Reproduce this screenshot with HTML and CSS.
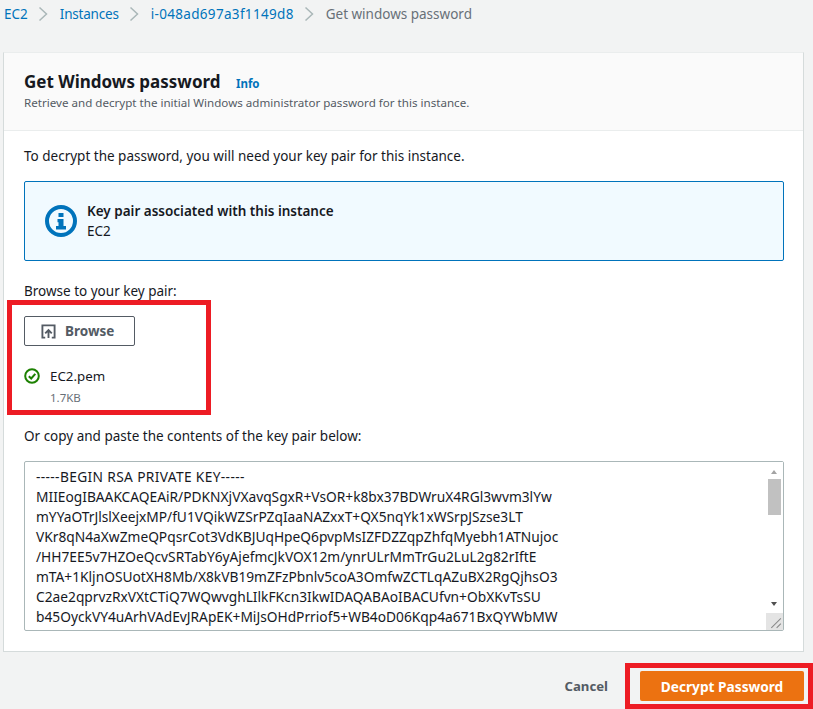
FILE: index.html
```html
<!DOCTYPE html>
<html lang="en">
<head>
<meta charset="utf-8">
<title>Get Windows password</title>
<link rel="stylesheet" href="styles.css">
</head>
<body>
<nav class="crumbs">
  <a class="link" href="#">EC2</a>
  <svg class="sep" viewBox="0 0 10 16"><path d="M1.500 1.500 8.500 8l-7 6.500"/></svg>
  <a class="link link-tight" href="#">Instances</a>
  <svg class="sep" viewBox="0 0 10 16"><path d="M1.500 1.500 8.500 8l-7 6.500"/></svg>
  <a class="link link-id" href="#">i-048ad697a3f1149d8</a>
  <svg class="sep" viewBox="0 0 10 16"><path d="M1.500 1.500 8.500 8l-7 6.500"/></svg>
  <span class="current">Get windows password</span>
</nav>
<main class="card">
  <header class="card-head">
    <h1 class="title">Get Windows password <a class="info" href="#">Info</a></h1>
    <p class="desc">Retrieve and decrypt the initial Windows administrator password for this instance.</p>
  </header>
  <section class="card-body">
    <p class="lead">To decrypt the password, you will need your key pair for this instance.</p>
    <div class="alert">
      <svg class="alert-icon" viewBox="0 0 32 32">
        <circle cx="16" cy="16" r="14" class="ring"/>
        <rect x="13.500" y="8" width="5" height="4" class="dot"/>
        <path class="dot" d="M12.500 14h6v7h2.500v3.500H11V21h2.500v-3.800h-1z"/>
      </svg>
      <div>
        <div class="alert-title">Key pair associated with this instance</div>
        <div class="alert-text">EC2</div>
      </div>
    </div>
    <label class="field-label label-browse">Browse to your key pair:</label>
    <button class="btn-browse" type="button">
      <svg class="upload" viewBox="0 0 16 16">
        <path d="M4.500 14.500H1.500v-13h13v13H11.500"/>
        <path d="M8 15V6.500M4.500 10 8 6.500l3.500 3.500"/>
      </svg>
      Browse
    </button>
    <div class="file">
      <svg class="ok" viewBox="0 0 16 16">
        <circle cx="8" cy="8" r="6.800"/>
        <path d="M4.800 8.200 7.200 10.500 11.300 5.800"/>
      </svg>
      <span class="file-name">EC2.pem</span>
    </div>
    <div class="file-size">1.7KB</div>
    <div class="field-label label-paste">Or copy and paste the contents of the key pair below:</div>
    <div class="key-wrap">
      <div class="key" role="textbox" aria-multiline="true"><span class="key-head">-----BEGIN RSA PRIVATE KEY-----</span>
MIIEogIBAAKCAQEAiR/PDKNXjVXavqSgxR+VsOR+k8bx37BDWruX4RGl3wvm3lYw
mYYaOTrJlslXeejxMP/fU1VQikWZSrPZqIaaNAZxxT+QX5nqYk1xWSrpJSzse3LT
VKr8qN4aXwZmeQPqsrCot3VdKBJUqHpeQ6pvpMsIZFDZZqpZhfqMyebh1ATNujoc
/HH7EE5v7HZOeQcvSRTabY6yAjefmcJkVOX12m/ynrULrMmTrGu2LuL2g82rIftE
mTA+1KljnOSUotXH8Mb/X8kVB19mZFzPbnlv5coA3OmfwZCTLqAZuBX2RgQjhsO3
C2ae2qprvzRxVXtCTiQ7WQwvghLIlkFKcn3IkwIDAQABAoIBACUfvn+ObXKvTsSU
b45OyckVY4uArhVAdEvJRApEK+MiJsOHdPrriof5+WB4oD06Kqp4a671BxQYWbMW</div>
      <div class="scroll">
        <span class="arrow arrow-up"></span>
        <span class="thumb"></span>
        <span class="arrow arrow-down"></span>
        <svg class="grip" viewBox="0 0 16 16"><path d="M14 5 5 14M14 10l-4 4"/></svg>
      </div>
    </div>
  </section>
</main>
<footer class="actions">
  <a class="cancel" href="#">Cancel</a>
  <button class="primary" type="button">Decrypt Password</button>
</footer>
<div class="mark mark-file"></div>
<div class="mark mark-submit"></div>
</body>
</html>
```
FILE: styles.css
```css
* { box-sizing: border-box; }
html, body { margin: 0; height: 100%; }
body {
  position: relative;
  background: #f2f3f3;
  color: #16191f;
  font-family: "Noto Sans", sans-serif;
  font-size: 14px;
  overflow: hidden;
}
.crumbs {
  display: flex;
  align-items: center;
  height: 28px;
  padding-left: 4px;
  font-size: 13.500px;
}
.link { color: #0073bb; text-decoration: none; }
.link-tight { letter-spacing: -0.200px; }
.link-id { letter-spacing: 0.320px; }
.current { color: #687078; }
.sep {
  width: 10px;
  height: 16px;
  margin: 0 12px 0 10px;
  fill: none;
  stroke: #aab7b8;
  stroke-width: 1.500;
}
.card {
  width: 801px;
  height: 600px;
  margin: 24px 0 0 3px;
  background: #fff;
  border: 1px solid #d5dbdb;
  border-top-color: #eaeded;
}
.card-head {
  height: 78px;
  padding: 17px 20px 0;
  background: #fafafa;
  border-bottom: 1px solid #eaeded;
}
.title {
  margin: 0;
  font-size: 17px;
  font-weight: 700;
  line-height: 24px;
}
.info {
  margin-left: 11px;
  color: #0073bb;
  font-size: 11.500px;
  font-weight: 700;
  text-decoration: none;
}
.desc {
  margin: -1px 0 0;
  color: #545b64;
  font-size: 11.600px;
  line-height: 16px;
}
.card-body { padding: 15px 19px 0 20px; }
.lead {
  margin: 0;
  color: #16191f;
  font-size: 13.500px;
  line-height: 20px;
}
.alert {
  display: flex;
  align-items: center;
  gap: 10px;
  height: 80px;
  margin-top: 15px;
  padding-left: 20px;
  background: #f1faff;
  border: 1px solid #0073bb;
  border-radius: 2px;
  font-size: 13.500px;
}
.alert-icon { width: 32px; height: 32px; flex: none; }
.ring { fill: none; stroke: #0073bb; stroke-width: 4; }
.dot { fill: #0073bb; }
.alert-title { font-weight: 600; line-height: 20px; }
.alert-text { color: #16191f; line-height: 20px; }
.field-label {
  display: block;
  color: #16191f;
  font-size: 13.500px;
  line-height: 20px;
}
.label-browse { margin-top: 20px; }
.btn-browse {
  display: flex;
  align-items: center;
  gap: 9px;
  width: 111px;
  height: 30px;
  margin-top: 15px;
  padding: 0 0 0 16px;
  background: #fff;
  border: 1px solid #545b64;
  border-radius: 2px;
  color: #545b64;
  font: 700 13.500px "Noto Sans", sans-serif;
}
.upload {
  width: 15px;
  height: 15px;
  fill: none;
  stroke: #545b64;
  stroke-width: 2;
}
.file {
  display: flex;
  align-items: center;
  gap: 10px;
  height: 20px;
  margin-top: 20px;
}
.ok {
  width: 16px;
  height: 16px;
  fill: none;
  stroke: #1d8102;
  stroke-width: 2;
}
.file-name { font-size: 13.300px; color: #16191f; }
.file-size {
  margin: 4px 0 0 26px;
  color: #687078;
  font-size: 11.500px;
  line-height: 16px;
}
.label-paste { margin-top: 20px; }
.key-wrap {
  position: relative;
  height: 170px;
  margin-top: 15px;
}
.key {
  width: 100%;
  height: 100%;
  padding: 5px 24px 0 11px;
  background: #fff;
  border: 1px solid #aab7b8;
  border-radius: 2px;
  color: #16191f;
  font: 400 13.750px/20px "Noto Sans", sans-serif;
  overflow: hidden;
  white-space: pre;
}
.key-head { letter-spacing: 0.350px; }
.scroll {
  position: absolute;
  top: 1px;
  right: 1px;
  bottom: 1px;
  width: 17px;
  background: #fff;
}
.arrow {
  position: absolute;
  left: 5px;
  width: 0;
  height: 0;
  border-left: 3.500px solid transparent;
  border-right: 3.500px solid transparent;
}
.arrow-up { top: 8px; border-bottom: 4px solid #a3a3a3; }
.arrow-down { bottom: 24px; border-top: 4px solid #505050; }
.thumb {
  position: absolute;
  top: 17px;
  left: 2px;
  width: 13px;
  height: 36px;
  background: #c1c1c1;
}
.grip {
  position: absolute;
  right: 0;
  bottom: 0;
  width: 17px;
  height: 17px;
  background: #e4e4e4;
  fill: none;
  stroke: #8a8a8a;
  stroke-width: 1;
}
.actions {
  display: flex;
  align-items: center;
  justify-content: flex-end;
  gap: 32px;
  height: 30px;
  margin: 19px 9px 0 0;
}
.cancel {
  color: #545b64;
  font-size: 13.200px;
  font-weight: 700;
  text-decoration: none;
}
.primary {
  width: 164px;
  height: 30px;
  background: #ec7211;
  border: 0;
  border-radius: 2px;
  color: #fff;
  font: 700 13.700px "Noto Sans", sans-serif;
}
.mark {
  position: absolute;
  border: 5px solid #ed1c24;
  pointer-events: none;
}
.mark-file { left: 7px; top: 300px; width: 204px; height: 115px; }
.mark-submit { left: 625px; top: 663px; width: 188px; height: 46px; }
```
